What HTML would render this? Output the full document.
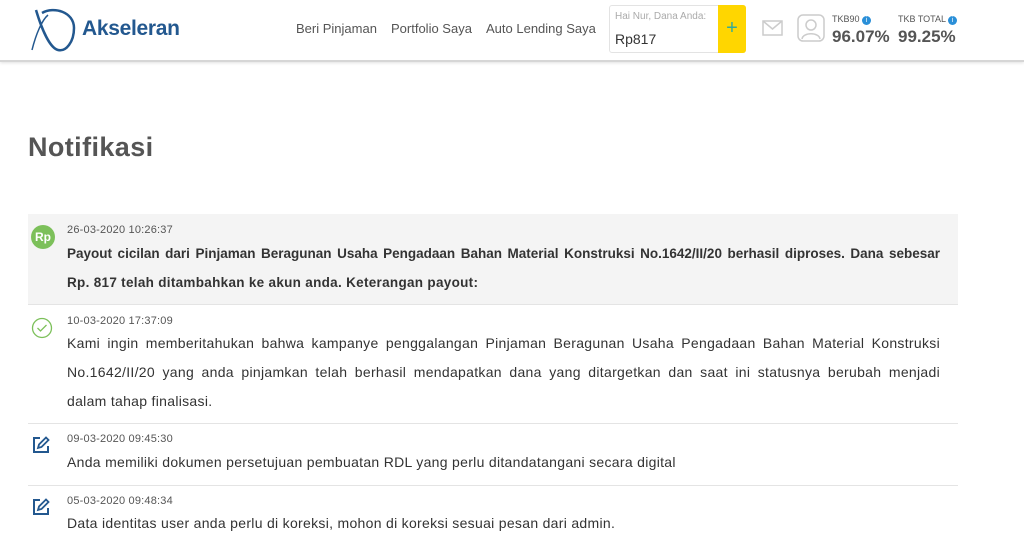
<!DOCTYPE html>
<html><head><meta charset="utf-8"><style>
*{margin:0;padding:0;box-sizing:border-box}
body{width:1024px;height:560px;overflow:hidden;background:#fff;font-family:"Liberation Sans",sans-serif;color:#333}
.hdr{position:absolute;left:0;top:0;width:1024px;height:62px;background:#fff;border-bottom:2px solid #d6d6d6;box-shadow:0 1px 3px rgba(0,0,0,.12)}
.logo{position:absolute;left:82px;top:17px;font-size:21px;font-weight:bold;color:#23588f;letter-spacing:-0.3px}
.nav{position:absolute;top:21px;font-size:13px;color:#555}
.box{position:absolute;left:609px;top:5px;width:137px;height:48px;border:1px solid #e3e3e3;border-radius:3px;background:#fff}
.box .l{position:absolute;left:5px;top:5px;font-size:10px;color:#aaa}
.box .v{position:absolute;left:5px;top:25px;font-size:14px;color:#333}
.box .p{position:absolute;right:-1px;top:-1px;width:28px;height:48px;background:#ffd600;border-radius:0 3px 3px 0;color:#3a9;font-size:20px;text-align:center;line-height:46px}
.tk{position:absolute;top:14px;font-size:9px;color:#555}
.tv{position:absolute;top:27px;font-size:17px;color:#555;font-weight:bold}
.i{display:inline-block;width:9px;height:9px;border-radius:50%;background:#2a8fd8;color:#fff;font-size:7px;text-align:center;line-height:9px;vertical-align:0}
h1{position:absolute;left:28px;top:132px;font-size:27px;color:#555;font-weight:bold;letter-spacing:0.4px}
.it{position:absolute;left:28px;width:930px;border-bottom:1px solid #e4e4e4}
.ts{position:absolute;left:39px;font-size:11px;color:#555;letter-spacing:0.2px}
.tx{position:absolute;left:39px;width:873px;font-size:14px;color:#333;letter-spacing:0.3px}
.tx div{height:29px;line-height:29px;text-align:justify;text-align-last:justify;white-space:nowrap;overflow:hidden}
.tx div.e{text-align-last:left}
.ic{position:absolute;left:3px}
</style></head><body>
<div class="hdr">
<svg style="position:absolute;left:28px;top:6px" width="52" height="48" viewBox="0 0 52 48"><path d="M4 44 C8 28 14 14 20 9" stroke="#23588f" stroke-width="1.5" fill="none"/><path d="M14 7 C26 0 46 6 46 22 C46 36 38 46 30 44 C22 42 14 24 8 4" stroke="#23588f" stroke-width="2.5" fill="none"/></svg>
<div class="logo">Akseleran</div>
<div class="nav" style="left:296px">Beri Pinjaman</div>
<div class="nav" style="left:391px">Portfolio Saya</div>
<div class="nav" style="left:486px">Auto Lending Saya</div>
<div class="box"><div class="l">Hai Nur, Dana Anda:</div><div class="v">Rp817</div><div class="p">+</div></div>
<svg style="position:absolute;left:762px;top:20px" width="21" height="16" viewBox="0 0 21 16"><rect x="1" y="1" width="19" height="14" fill="none" stroke="#ccc" stroke-width="1.5"/><path d="M1 1 L10.5 9 L20 1" fill="none" stroke="#ccc" stroke-width="1.5"/></svg>
<svg style="position:absolute;left:797px;top:14px" width="28" height="28" viewBox="0 0 28 28"><rect x="1" y="1" width="26" height="26" rx="5" fill="none" stroke="#ccc" stroke-width="1.5"/><circle cx="14" cy="11" r="5" fill="none" stroke="#ccc" stroke-width="1.5"/><path d="M5 25 C6 18 22 18 23 25" fill="none" stroke="#ccc" stroke-width="1.5"/></svg>
<div class="tk" style="left:832px">TKB90 <span class="i">i</span></div>
<div class="tv" style="left:832px">96.07%</div>
<div class="tk" style="left:898px">TKB TOTAL <span class="i">i</span></div>
<div class="tv" style="left:898px">99.25%</div>
</div>
<h1>Notifikasi</h1>

<div class="it" style="top:214px;height:91px;background:#f4f4f4">
<div class="ic" style="top:11px;width:24px;height:24px;border-radius:50%;background:#7cc05a;color:#fff;font-size:12px;font-weight:bold;text-align:center;line-height:24px">Rp</div>
<div class="ts" style="top:10px">26-03-2020 10:26:37</div>
<div class="tx" style="top:25px;font-weight:bold;letter-spacing:0;font-size:13.5px"><div>Payout cicilan dari Pinjaman Beragunan Usaha Pengadaan Bahan Material Konstruksi No.1642/II/20 berhasil diproses. Dana sebesar</div><div class="e" style="letter-spacing:0.3px">Rp. 817 telah ditambahkan ke akun anda. Keterangan payout:</div></div>
</div>

<div class="it" style="top:305px;height:119px">
<svg class="ic" style="top:12px" width="22" height="22" viewBox="0 0 22 22"><circle cx="11" cy="11" r="9.5" fill="none" stroke="#7cc05a" stroke-width="1.3"/><path d="M6.5 11 L9.5 14 L15.5 8" fill="none" stroke="#7cc05a" stroke-width="1.3"/></svg>
<div class="ts" style="top:10px">10-03-2020 17:37:09</div>
<div class="tx" style="top:24px"><div>Kami ingin memberitahukan bahwa kampanye penggalangan Pinjaman Beragunan Usaha Pengadaan Bahan Material Konstruksi</div><div>No.1642/II/20 yang anda pinjamkan telah berhasil mendapatkan dana yang ditargetkan dan saat ini statusnya berubah menjadi</div><div class="e">dalam tahap finalisasi.</div></div>
</div>

<div class="it" style="top:424px;height:62px">
<svg class="ic" style="top:11px" width="20" height="20" viewBox="0 0 20 20"><path d="M9 3 H3 V17 H17 V11" fill="none" stroke="#23588f" stroke-width="2"/><path d="M7 13 L8 9.5 L15 2.5 L17.5 5 L10.5 12 Z" fill="none" stroke="#23588f" stroke-width="1.8"/></svg>
<div class="ts" style="top:9px">09-03-2020 09:45:30</div>
<div class="tx" style="top:24px"><div class="e">Anda memiliki dokumen persetujuan pembuatan RDL yang perlu ditandatangani secara digital</div></div>
</div>

<div class="it" style="top:486px;height:74px;border:none">
<svg class="ic" style="top:11px" width="20" height="20" viewBox="0 0 20 20"><path d="M9 3 H3 V17 H17 V11" fill="none" stroke="#23588f" stroke-width="2"/><path d="M7 13 L8 9.5 L15 2.5 L17.5 5 L10.5 12 Z" fill="none" stroke="#23588f" stroke-width="1.8"/></svg>
<div class="ts" style="top:9px">05-03-2020 09:48:34</div>
<div class="tx" style="top:23px"><div class="e">Data identitas user anda perlu di koreksi, mohon di koreksi sesuai pesan dari admin.</div></div>
</div>
</body></html>
